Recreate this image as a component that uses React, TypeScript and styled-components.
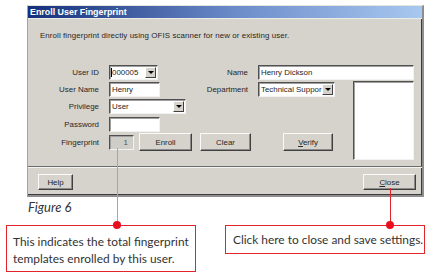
import React from 'react';
import styled, { createGlobalStyle } from 'styled-components';

const GlobalStyle = createGlobalStyle`
  html, body {
    margin: 0;
    padding: 0;
    background: #fff;
  }
  body {
    width: 435px;
    height: 278px;
    overflow: hidden;
  }
`;

const UI_FONT = `'Liberation Sans', Arial, sans-serif`;
const NOTE_FONT = `Lato, 'Open Sans', sans-serif`;

const Page = styled.div`
  display: flex;
  flex-direction: column;
  width: 435px;
  height: 278px;
`;

const Dialog = styled.div`
  box-sizing: border-box;
  width: 397px;
  margin: 5px 0 0 27px;
  display: flex;
  flex-direction: column;
  background: #d6d3cc;
  border-top: 1px solid #e6e4de;
  border-left: 1px solid #a4a4a4;
  border-right: 2px solid #8e8e8e;
  border-bottom: 2px solid #8e8e8e;
  box-shadow: inset -1px -1px 0 #3c3c3c;
  font-family: ${UI_FONT};
  font-size: 7.9px;
  color: #262626;
`;

const TitleBar = styled.div`
  height: 12px;
  display: flex;
  align-items: center;
  padding-left: 2px;
  background: linear-gradient(to right, #14307a 0%, #6f8fcc 55%, #a8c8f0 100%);
  color: #fff;
  font-weight: bold;
  font-size: 8.9px;
  border-bottom: 1px solid #ecebe6;
`;

const Intro = styled.p`
  margin: 12px 0 0 12px;
  line-height: 10px;
  letter-spacing: 0.1px;
`;

const Form = styled.div`
  display: grid;
  grid-template-columns: 81px 91px 58px 95px 61px;
  grid-template-rows: 18px 17px 17px 18px 18px;
  align-items: center;
  margin-top: 22px;
`;

const Label = styled.div`
  text-align: right;
  padding-right: 10px;
  white-space: nowrap;
`;

const Box = styled.div<{ $w?: number; $span?: string }>`
  box-sizing: border-box;
  width: ${(p) => (p.$w ? `${p.$w}px` : 'auto')};
  height: 15px;
  display: flex;
  align-items: center;
  justify-content: space-between;
  padding-left: 2px;
  background: #fff;
  border: 1px solid;
  border-color: #505050 #f2f2f2 #f2f2f2 #505050;
  box-shadow: inset 1px 1px 0 #a0a0a0;
  white-space: nowrap;
  overflow: hidden;
  grid-column: ${(p) => p.$span || 'auto'};
`;

const Caret = styled.span`
  border-left: 1px solid #000;
  margin-left: -1px;
`;

const DropBtn = styled.span`
  box-sizing: border-box;
  flex: none;
  width: 11px;
  height: 11px;
  margin-right: 1px;
  display: flex;
  align-items: center;
  justify-content: center;
  background: #d6d3cc;
  border: 1px solid;
  border-color: #fff #404040 #404040 #fff;
  &::after {
    content: '';
    border-left: 3px solid transparent;
    border-right: 3px solid transparent;
    border-top: 3px solid #000;
  }
`;

const ListBox = styled(Box)`
  grid-column: 5;
  grid-row: 2 / 6;
  align-self: start;
  height: 79px;
  width: 61px;
`;

const CountBox = styled(Box)`
  width: 25px;
  justify-content: flex-end;
  padding-right: 5px;
  background: #cfcdc8;
  color: #555;
`;

const ButtonRow = styled.div`
  grid-column: 2 / 5;
  display: flex;
  align-items: center;
`;

const Button = styled.button<{ $w: number; $ml?: number; $h?: number }>`
  box-sizing: border-box;
  width: ${(p) => p.$w}px;
  height: ${(p) => p.$h || 18}px;
  margin-left: ${(p) => p.$ml || 0}px;
  padding: 0;
  background: #d6d3cc;
  border: 1px solid;
  border-color: #fafafa #404040 #404040 #fafafa;
  box-shadow: inset -1px -1px 0 #8a8a8a;
  font-family: ${UI_FONT};
  font-size: 7.9px;
  color: #262626;
`;

const Separator = styled.div`
  margin-top: 15px;
  height: 1px;
  background: #6c6c6c;
  border-bottom: 1px solid #f4f4f2;
`;

const Footer = styled.div`
  display: flex;
  justify-content: space-between;
  padding: 6px 6px 5px 10px;
`;

const Caption = styled.div`
  margin: 3px 0 0 28px;
  font-family: ${NOTE_FONT};
  font-style: italic;
  font-size: 13px;
  line-height: 15px;
  color: #333;
`;

const Notes = styled.div`
  display: flex;
  align-items: flex-start;
  margin-top: 10px;
`;

const Note = styled.div<{ $w: number; $h: number; $ml: number; $pin: number; $reach: number; $line: string }>`
  position: relative;
  box-sizing: border-box;
  width: ${(p) => p.$w}px;
  height: ${(p) => p.$h}px;
  margin-left: ${(p) => p.$ml}px;
  padding: ${(p) => (p.$h > 35 ? '7px 0 0 6px' : '5px 0 0 7px')};
  border: 1px solid #e3242b;
  font-family: ${NOTE_FONT};
  font-size: 11.9px;
  line-height: 17px;
  color: #333;
  white-space: nowrap;
  &::before {
    content: '';
    position: absolute;
    left: ${(p) => p.$pin}px;
    top: -${(p) => p.$reach}px;
    width: 1px;
    height: ${(p) => p.$reach}px;
    background: ${(p) => p.$line};
  }
  &::after {
    content: '';
    position: absolute;
    left: ${(p) => p.$pin - 4}px;
    top: -5px;
    width: 8px;
    height: 8px;
    border-radius: 50%;
    background: #e8101e;
  }
`;

export default function App() {
  return (
    <Page>
      <GlobalStyle />
      <Dialog>
        <TitleBar>Enroll User Fingerprint</TitleBar>
        <Intro>Enroll fingerprint directly using OFIS scanner for new or existing user.</Intro>
        <Form>
          <Label>User ID</Label>
          <Box $w={49}>
            <span>
              <Caret />
              000005
            </span>
            <DropBtn />
          </Box>
          <Label>Name</Label>
          <Box $w={156} $span="4 / 6">Henry Dickson</Box>

          <Label>User Name</Label>
          <Box $w={51}>Henry</Box>
          <Label>Department</Label>
          <Box $w={77}>
            <span>Technical Suppor</span>
            <DropBtn />
          </Box>
          <ListBox />

          <Label>Privilege</Label>
          <Box $w={77}>
            <span>User</span>
            <DropBtn />
          </Box>
          <div />
          <div />

          <Label>Password</Label>
          <Box $w={51} />
          <div />
          <div />

          <Label>Fingerprint</Label>
          <ButtonRow>
            <CountBox>1</CountBox>
            <Button $w={53} $ml={5}>Enroll</Button>
            <Button $w={51} $ml={8}>Clear</Button>
            <Button $w={50} $ml={32}>
              <u>V</u>erify
            </Button>
          </ButtonRow>
        </Form>
        <Separator />
        <Footer>
          <Button $w={35} $h={16}>Help</Button>
          <Button $w={53} $h={16}>
            <u>C</u>lose
          </Button>
        </Footer>
      </Dialog>
      <Caption>Figure 6</Caption>
      <Notes>
        <Note $w={190} $h={47} $ml={6} $pin={110} $reach={78} $line="#f0868f">
          This indicates the total fingerprint
          <br />
          templates enrolled by this user.
        </Note>
        <Note $w={200} $h={29} $ml={29} $pin={164} $reach={38} $line="#e3242b">
          Click here to close and save settings.
        </Note>
      </Notes>
    </Page>
  );
}
